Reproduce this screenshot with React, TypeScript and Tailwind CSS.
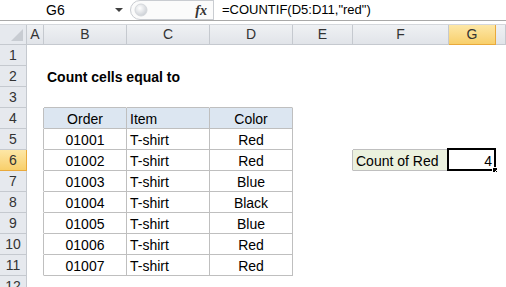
import { ReactNode } from "react";

const FONT = { fontFamily: '"Liberation Sans", Arial, sans-serif' };

const COL_KEYS = ["A", "B", "C", "D", "E", "F", "G", "H"];

const ORDERS = [
  ["01001", "T-shirt", "Red"],
  ["01002", "T-shirt", "Red"],
  ["01003", "T-shirt", "Blue"],
  ["01004", "T-shirt", "Black"],
  ["01005", "T-shirt", "Blue"],
  ["01006", "T-shirt", "Red"],
  ["01007", "T-shirt", "Red"],
];

function inTable(r: number, c: string) {
  return r >= 4 && r <= 11 && (c === "B" || c === "C" || c === "D");
}

function cellContent(r: number, c: string): { text?: ReactNode; align?: string; bg?: string; bold?: boolean } {
  if (r === 2 && c === "B") return { text: "Count cells equal to", align: "left", bold: true };
  if (r === 4) {
    if (c === "B") return { text: "Order", align: "center", bg: "bg-[#dce6f1]" };
    if (c === "C") return { text: "Item", align: "left", bg: "bg-[#dce6f1]" };
    if (c === "D") return { text: "Color", align: "center", bg: "bg-[#dce6f1]" };
  }
  if (r >= 5 && r <= 11) {
    const row = ORDERS[r - 5];
    if (c === "B") return { text: row[0], align: "center" };
    if (c === "C") return { text: row[1], align: "left" };
    if (c === "D") return { text: row[2], align: "center" };
  }
  if (r === 6 && c === "F") return { text: "Count of Red", align: "left", bg: "bg-[#ebf1de]" };
  if (r === 6 && c === "G") return { text: "4", align: "right" };
  return {};
}

function Cell({ r, c }: { r: number; c: string }) {
  const right =
    inTable(r, c) || (c === "A" && r >= 4 && r <= 11) || (r === 6 && (c === "E" || c === "F"));
  const bottom =
    inTable(r, c) || (r === 3 && ["B", "C", "D"].includes(c)) || (r === 5 && c === "F") || (r === 6 && c === "F");
  const { text, align, bg, bold } = cellContent(r, c);
  const selected = r === 6 && c === "G";
  return (
    <div
      className={`relative flex h-[21px] items-end border-r border-b pb-[2px] text-[14px] leading-none text-black ${
        right ? "border-r-[#bfbfbf]" : "border-r-white"
      } ${bottom ? "border-b-[#bfbfbf]" : "border-b-white"} ${bg ?? ""} ${
        align === "center" ? "justify-center" : align === "right" ? "justify-end pr-[3px]" : "justify-start pl-[3px]"
      }`}
    >
      {text && <span className={`whitespace-nowrap ${bold ? "font-bold" : ""}`}>{text}</span>}
      {selected && (
        <div className="absolute -left-[2px] -top-[2px] h-[23px] w-[49px] border-2 border-black">
          <div className="absolute -bottom-[4px] -right-[4px] h-[6px] w-[6px] border border-white bg-black" />
        </div>
      )}
    </div>
  );
}

function FormulaBar() {
  return (
    <div className="flex h-[21px] items-center border-b border-[#a9a9a9] bg-white text-[14px] text-black">
      <div className="flex w-[128px] items-center">
        <span className="pl-[46px]">G6</span>
        <svg width="8" height="5" viewBox="0 0 8 5" className="ml-[50px]">
          <path d="M0 0 L8 0 L4 4 Z" fill="#404040" />
        </svg>
      </div>
      <div className="relative flex h-full w-[85px] items-center justify-end">
        <svg width="85" height="20" viewBox="0 0 85 20" className="absolute left-0 top-0">
          <defs>
            <radialGradient id="knob" cx="0.4" cy="0.35" r="0.7">
              <stop offset="0" stopColor="#ffffff" />
              <stop offset="1" stopColor="#c9cdd3" />
            </radialGradient>
          </defs>
          <path d="M85 0.5 L12 0.5 A9.5 9.5 0 0 0 12 19.5 L85 19.5" fill="#fbfbfb" stroke="#c9ccd1" />
          <circle cx="13" cy="10" r="6" fill="url(#knob)" stroke="#d5d8dc" />
        </svg>
        <span
          className="relative mr-[6px] text-[14px] font-bold italic text-[#333]"
          style={{ fontFamily: '"Liberation Serif", "Times New Roman", serif' }}
        >
          fx
        </span>
      </div>
      <div className="h-full w-px bg-[#c9ccd1]" />
      <span className="pl-[8px] text-[13px]">=COUNTIF(D5:D11,"red")</span>
    </div>
  );
}

export default function App() {
  const rows = Array.from({ length: 12 }, (_, i) => i + 1);
  return (
    <div className="h-[287px] w-[506px] overflow-hidden bg-white" style={FONT}>
      <FormulaBar />
      <div className="h-[4px] border-b border-[#d4d7dc] bg-white" />
      <div className="grid grid-cols-[27px_17px_83px_83px_83px_60px_96px_47px_1fr]">
        <div className="relative h-[20px] border-r border-b border-[#c5c9cf] bg-[#e6e9ee]">
          <svg width="12" height="12" viewBox="0 0 12 12" className="absolute bottom-[3px] right-[3px]">
            <path d="M12 0 L12 12 L0 12 Z" fill="#c8ccd2" />
          </svg>
        </div>
        {COL_KEYS.map((k) => (
          <div
            key={k}
            className={`flex h-[20px] items-center justify-center border-r border-b text-[14px] ${
              k === "G"
                ? "border-[#e9a93b] bg-gradient-to-b from-[#fde7a6] to-[#f8cf6a] text-[#333]"
                : "border-[#c5c9cf] bg-gradient-to-b from-[#eff1f4] to-[#e1e4e9] text-[#333]"
            }`}
          >
            {k === "H" ? "" : k}
          </div>
        ))}
        {rows.map((r) => (
          <div key={r} className="contents">
            <div
              className={`flex h-[21px] items-center justify-center border-r border-b text-[14px] ${
                r === 6
                  ? "border-[#e9a93b] bg-gradient-to-b from-[#fde7a6] to-[#f8cf6a] text-[#333]"
                  : "border-[#c5c9cf] bg-[#e6e9ee] text-[#333]"
              }`}
            >
              {r}
            </div>
            {COL_KEYS.map((c) => (
              <Cell key={c} r={r} c={c} />
            ))}
          </div>
        ))}
      </div>
    </div>
  );
}
